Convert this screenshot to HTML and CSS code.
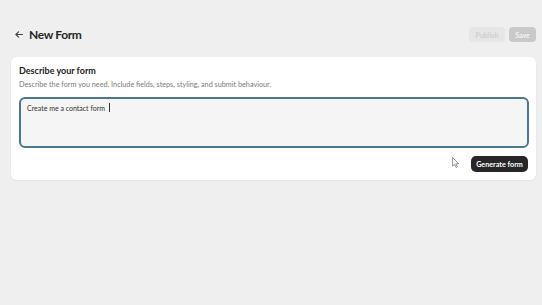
FILE: index.html
```html
<!DOCTYPE html>
<html>
<head>
<meta charset="utf-8">
<link rel="stylesheet" href="styles.css">
</head>
<body>
<div class="page">
  <header class="top">
    <div class="title-wrap">
      <svg class="back" width="8" height="7" viewBox="0 0 8 7"><path d="M7.5 3.5H1M3.6 0.8L0.9 3.5l2.7 2.7" fill="none" stroke="#444" stroke-width="1.1" stroke-linecap="round" stroke-linejoin="round"/></svg>
      <h1 class="title">New Form</h1>
    </div>
    <div class="actions">
      <button class="btn-publish">Publish</button>
      <button class="btn-save">Save</button>
    </div>
  </header>
  <section class="card">
    <h2 class="card-title">Describe your form</h2>
    <p class="card-sub">Describe the form you need. Include fields, steps, styling, and submit behaviour.</p>
    <div class="field">Create me a contact form <span class="caret"></span></div>
    <div class="card-foot">
      <svg class="pointer" width="8" height="11" viewBox="0 0 8 11"><path d="M0.6 0.6v8.6l2-1.9 1.5 3.2 1.3-0.6-1.5-3.1h2.8z" fill="#fff" stroke="#777" stroke-width="0.8" stroke-linejoin="round"/></svg>
      <button class="btn-generate">Generate form</button>
    </div>
  </section>
</div>
</body>
</html>
```
FILE: styles.css
```css
* { box-sizing: border-box; }
html, body { margin: 0; padding: 0; }
body {
  background: #efefef;
  font-family: "Lato", "Open Sans", sans-serif;
  color: #222;
  width: 542px;
  height: 305px;
  overflow: hidden;
}
.page { padding: 26px 6px 0 11px; }
.top {
  display: flex;
  align-items: center;
  justify-content: space-between;
  height: 17px;
  margin-bottom: 14px;
}
.title-wrap { display: flex; align-items: center; gap: 6px; padding-left: 4px; }
.back { display: block; }
.title {
  margin: 0;
  font-size: 12px;
  letter-spacing: -0.35px;
  font-weight: 700;
  color: #262626;
  line-height: 17px;
}
.actions { display: flex; gap: 4px; }
.actions button {
  border: 0;
  font-family: inherit;
  font-size: 7px;
  font-weight: 700;
  height: 15px;
  border-radius: 4px;
  padding: 0;
}
.btn-publish { width: 36px; background: #e6e6e6; color: #cfcfcf; }
.btn-save { width: 27px; background: #c9c9c9; color: #f4f4f4; }
.card {
  width: 525px;
  background: #fff;
  border-radius: 6px;
  box-shadow: 0 1px 2px rgba(0,0,0,0.05);
  padding: 8px 7px 8px 8px;
}
.card-title {
  margin: 0;
  font-size: 9px;
  font-weight: 700;
  color: #222;
  line-height: 11px;
}
.card-sub {
  margin: 4px 0 0;
  font-size: 7.25px;
  color: #7a7a7a;
  line-height: 10px;
}
.field {
  margin-top: 7px;
  height: 51px;
  border: 2px solid #4b7890;
  border-radius: 6px;
  background: #f5f5f5;
  padding: 4px 6px;
  font-size: 7px;
  color: #333;
  line-height: 11px;
}
.caret {
  display: inline-block;
  width: 0.8px;
  height: 9px;
  background: #333;
  vertical-align: -1px;
  margin-left: 2px;
}
.card-foot {
  display: flex;
  justify-content: flex-end;
  align-items: center;
  gap: 11px;
  margin-top: 8px;
  padding-right: 1px;
}
.pointer { display: block; margin-top: -4px; }
.btn-generate {
  border: 0;
  background: #272727;
  color: #fff;
  font-family: inherit;
  font-size: 7.2px;
  font-weight: 700;
  height: 16px;
  width: 57px;
  border-radius: 5px;
  padding: 0;
}
```
